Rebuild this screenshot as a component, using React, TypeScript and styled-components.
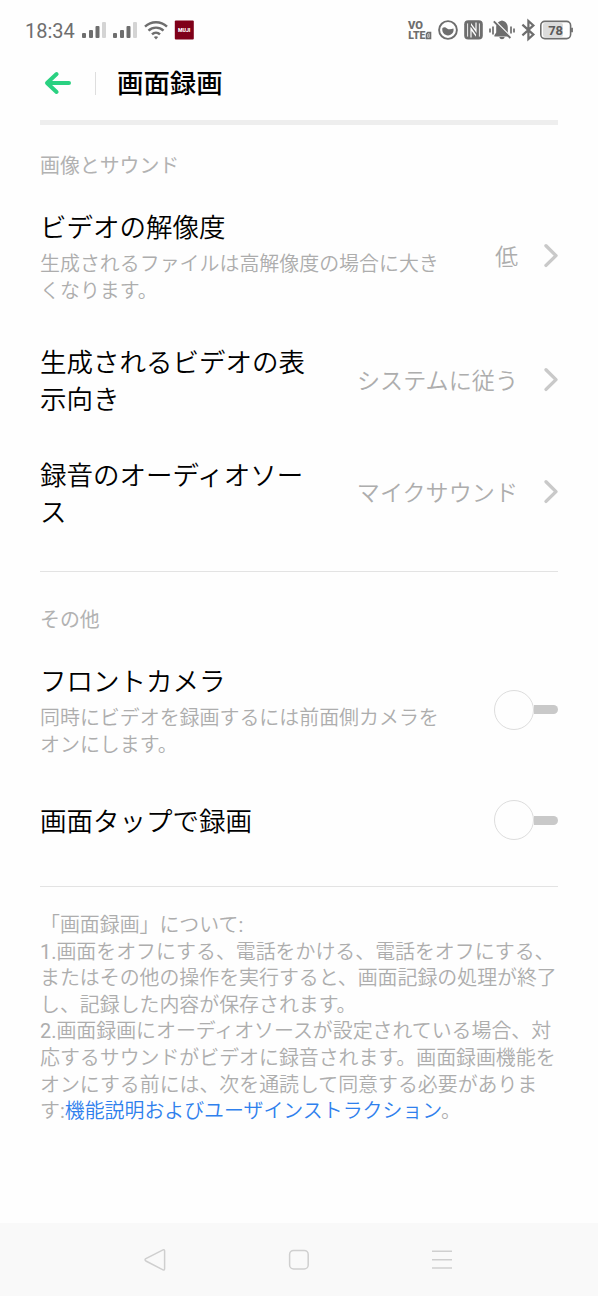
import React from 'react'
import styled, { createGlobalStyle } from 'styled-components'

const colors = {
  text: '#000000',
  muted: '#b2b2b2',
  soft: '#adadad',
  status: '#6e6e6e',
  accent: '#2ad181',
  link: '#2f80ed',
  divider: '#e3e3e3',
  control: '#c9c9c9',
}

const GlobalStyle = createGlobalStyle`
  * {
    box-sizing: border-box;
  }

  body {
    margin: 0;
    background: #fefefe;
    font-family: Roboto, 'Noto Sans CJK JP', sans-serif;
    text-spacing-trim: space-all;
  }

  svg {
    display: block;
    flex: none;
    overflow: visible;
  }
`

const Screen = styled.div`
  display: flex;
  flex-direction: column;
  width: 598px;
  height: 1296px;
  background: #fefefe;
  overflow: hidden;
`

const StatusBar = styled.div`
  display: flex;
  align-items: center;
  justify-content: space-between;
  height: 60px;
  padding: 0 24px 0 25px;
`

const StatusGroup = styled.div`
  display: flex;
  align-items: center;
  gap: 6px;
`

const Time = styled.span`
  width: 51px;
  color: ${colors.status};
  font-size: 20px;
  line-height: 24px;
  padding-top: 2px;
`

const Header = styled.header`
  display: flex;
  align-items: center;
  height: 65px;
  margin: 0 40px;
  padding: 0 0 14px 4px;
  border-bottom: 5px solid #eeeeee;
`

const HeaderDivider = styled.div`
  width: 1px;
  height: 23px;
  margin: 0 21px 0 23px;
  background: #dedede;
`

const HeaderTitle = styled.h1`
  margin: 0;
  padding-top: 2px;
  color: ${colors.text};
  font-size: 26.4px;
  font-weight: 500;
  line-height: 36px;
`

const Section = styled.section<{ $height: number }>`
  height: ${({ $height }) => $height}px;
  margin: 0 40px;
  border-bottom: 1px solid ${colors.divider};
`

const SectionTitle = styled.h2<{ $top: number; $bottom: number }>`
  margin: 0;
  padding: ${({ $top, $bottom }) => `${$top}px 0 ${$bottom}px`};
  color: ${colors.muted};
  font-size: 19.9px;
  font-weight: 400;
  line-height: 30px;
`

const Row = styled.div<{ $height: number }>`
  display: flex;
  align-items: center;
  justify-content: space-between;
  height: ${({ $height }) => $height}px;
`

const RowText = styled.div<{ $width: number }>`
  width: ${({ $width }) => $width}px;
  padding-top: 3px;
`

const RowTitle = styled.div`
  color: ${colors.text};
  font-size: 26.5px;
  font-weight: 350;
  line-height: 37px;
`

const RowDesc = styled.div`
  margin-top: 5px;
  color: ${colors.soft};
  font-size: 19.95px;
  font-weight: 350;
  line-height: 27px;
`

const RowValue = styled.div`
  display: flex;
  align-items: center;
  gap: 26px;
  color: ${colors.soft};
  font-size: 23.1px;
  font-weight: 350;
  white-space: nowrap;

  span {
    padding-top: 4px;
    line-height: 34px;
  }
`

const Switch = styled.div`
  display: flex;
  align-items: center;
  width: 64px;
`

const Knob = styled.div`
  width: 40px;
  height: 40px;
  border: 1px solid #dddddd;
  border-radius: 50%;
`

const Track = styled.div`
  width: 24px;
  height: 9px;
  border-radius: 0 5px 5px 0;
  background: ${colors.control};
`

const Notes = styled.div`
  flex: 1;
  margin: 0 40px;
  padding-top: 26px;
  color: ${colors.soft};
  font-size: 19.92px;
  font-weight: 350;
  line-height: 26.6px;

  p {
    margin: 0;
  }
`

const Latin = styled.span`
  font-weight: 400;
`

const NoteLink = styled.a`
  color: ${colors.link};
`

const NavBar = styled.nav`
  display: flex;
  justify-content: space-between;
  height: 73px;
  padding: 25px 143px 0;
  background: #f9f9f9;
`

const SignalIcon = () => (
  <svg width="25" height="18" viewBox="0 0 25 18" fill={colors.status}>
    <rect x="0" y="12" width="4" height="5" rx="1" />
    <rect x="7" y="9" width="4" height="8" rx="1" />
    <rect x="13.5" y="5" width="4" height="12" rx="1" />
    <rect x="20" y="1" width="4" height="16" rx="1" fill="#d4d4d4" />
  </svg>
)

const WifiIcon = () => (
  <svg width="24" height="20" viewBox="0 0 24 20" fill="none" stroke={colors.status} strokeWidth="2.4">
    <path d="M1 6.6C7.2 0.8 16.8 0.8 23 6.6" />
    <path d="M4.5 10.6C8.8 6.6 15.2 6.6 19.5 10.6" />
    <path d="M8 14.4C10.3 12.2 13.7 12.2 16 14.4" />
    <path d="M9.8 17.1C11.1 16 12.9 16 14.2 17.1L12 19.4Z" fill={colors.status} stroke="none" />
  </svg>
)

const AppIcon = () => (
  <svg width="20" height="20" viewBox="0 0 20 20">
    <rect x="0.8" y="0.5" width="19" height="19" rx="1" fill="#7f0019" />
    <text
      x="10.2"
      y="12"
      fill="#fff"
      fontSize="5.8"
      fontWeight="900"
      textAnchor="middle"
      textLength="12.5"
      lengthAdjust="spacingAndGlyphs"
    >
      MUJI
    </text>
  </svg>
)

const VolteIcon = () => (
  <svg width="24" height="20" viewBox="0 0 24 20" fill={colors.status} fontWeight="900" fontSize="11">
    <text x="0" y="9.2" textLength="15" lengthAdjust="spacingAndGlyphs">
      VO
    </text>
    <text x="0.3" y="19.4" textLength="17" lengthAdjust="spacingAndGlyphs">
      LTE
    </text>
    <path d="M19.8 12.6H22.4V18.4H18.6V14Z" fill="none" stroke={colors.status} strokeWidth="1.8" />
    <path d="M20.6 14V17" stroke={colors.status} strokeWidth="0.8" />
  </svg>
)

const DataIcon = () => (
  <svg width="20" height="20" viewBox="0 0 20 20">
    <circle cx="10" cy="10" r="8.9" fill="none" stroke={colors.status} strokeWidth="1.9" />
    <path
      d="M4.4 8C6 6.8 7.6 7.2 9 8.4C10.8 9.8 13 9.4 15.4 8.6C16.4 12 13.6 15.4 10 15.4C6.4 15.4 3.6 12.2 4.4 8Z"
      fill={colors.status}
    />
  </svg>
)

const NfcIcon = () => (
  <svg width="19" height="20" viewBox="0 0 19 20">
    <rect x="0.2" y="0.3" width="18.6" height="19.2" rx="4" fill={colors.status} />
    <path d="M3.6 3.4V16.6M15.4 3.4V16.6" fill="none" stroke="#fefefe" strokeWidth="0.9" />
    <path d="M7 7.2L12 14.6V16.8L7.6 11V17.6H6.4V7.2Z" fill="#fefefe" />
    <path d="M12.4 12.8L7 5.2V3L11.4 9V2.4H12.6V12.8Z" fill="#fefefe" />
  </svg>
)

const MutedBellIcon = () => (
  <svg width="26" height="20" viewBox="0 0 26 20" fill="none" stroke={colors.status} strokeWidth="1.7">
    <path
      d="M13 0.6C8.8 1.6 7.2 4.4 7.2 8V12.6L5.4 15.2V16.4H20.6V15.2L18.8 12.6V8C18.8 4.4 17.2 1.6 13 0.6ZM10.4 17H15.6C15.4 20 10.6 20 10.4 17Z"
      fill={colors.status}
      stroke="none"
    />
    <path d="M6.8 1.6L22 16.8" stroke="#fefefe" strokeWidth="1.5" />
    <path d="M4.8 1.4L21.4 18" strokeWidth="1.9" />
    <path d="M1 8.5V12.5M4 6.5V14.5M22 6.5V13.5M25 8.5V12.5" />
  </svg>
)

const BluetoothIcon = () => (
  <svg width="14" height="22" viewBox="0 0 14 22" fill="none" stroke={colors.status} strokeWidth="2.2">
    <path d="M1.4 5.6L12.4 15.6L7.4 20V2L12.4 6.4L1.4 16.4" />
  </svg>
)

const BatteryIcon = () => (
  <svg width="33" height="20" viewBox="0 0 33 20">
    <rect x="2" y="3" width="20" height="14" rx="2" fill="#dcdcdc" />
    <rect x="-0.2" y="1.4" width="29.8" height="17.2" rx="4" fill="none" stroke={colors.status} strokeWidth="1.6" />
    <path d="M31 7.8V12.2" stroke={colors.status} strokeWidth="1.8" />
    <text x="14.6" y="14.6" fill="#5a5a5a" fontSize="13" fontWeight="700" textAnchor="middle">
      78
    </text>
  </svg>
)

const BackArrow = () => (
  <svg
    width="28"
    height="24"
    viewBox="0 0 28 24"
    fill="none"
    stroke={colors.accent}
    strokeWidth="4"
    strokeLinecap="round"
    strokeLinejoin="round"
  >
    <path d="M12.6 3L3 12L12.6 21M3.6 12H25" />
  </svg>
)

const Chevron = () => (
  <svg
    width="14"
    height="24"
    viewBox="0 0 14 24"
    fill="none"
    stroke={colors.control}
    strokeWidth="3.4"
    strokeLinecap="round"
    strokeLinejoin="round"
  >
    <path d="M2 1.8L12 11.6L2 21.4" />
  </svg>
)

const Toggle = () => (
  <Switch role="switch" aria-checked={false}>
    <Knob />
    <Track />
  </Switch>
)

const App: React.FC = () => {
  return (
    <>
      <GlobalStyle />
      <Screen>
        <StatusBar>
          <StatusGroup>
            <Time>18:34</Time>
            <SignalIcon />
            <SignalIcon />
            <WifiIcon />
            <AppIcon />
          </StatusGroup>
          <StatusGroup>
            <VolteIcon />
            <DataIcon />
            <NfcIcon />
            <MutedBellIcon />
            <BluetoothIcon />
            <BatteryIcon />
          </StatusGroup>
        </StatusBar>

        <Header>
          <BackArrow />
          <HeaderDivider />
          <HeaderTitle>画面録画</HeaderTitle>
        </Header>

        <Section $height={447}>
          <SectionTitle $top={27} $bottom={6}>
            画像とサウンド
          </SectionTitle>
          <Row $height={135}>
            <RowText $width={410}>
              <RowTitle>ビデオの解像度</RowTitle>
              <RowDesc>生成されるファイルは高解像度の場合に大きくなります。</RowDesc>
            </RowText>
            <RowValue>
              <span>低</span>
              <Chevron />
            </RowValue>
          </Row>
          <Row $height={113}>
            <RowText $width={276}>
              <RowTitle>生成されるビデオの表示向き</RowTitle>
            </RowText>
            <RowValue>
              <span>システムに従う</span>
              <Chevron />
            </RowValue>
          </Row>
          <Row $height={112}>
            <RowText $width={276}>
              <RowTitle>録音のオーディオソース</RowTitle>
            </RowText>
            <RowValue>
              <span>マイクサウンド</span>
              <Chevron />
            </RowValue>
          </Row>
        </Section>

        <Section $height={315}>
          <SectionTitle $top={34} $bottom={6}>
            その他
          </SectionTitle>
          <Row $height={135}>
            <RowText $width={410}>
              <RowTitle>フロントカメラ</RowTitle>
              <RowDesc>同時にビデオを録画するには前面側カメラをオンにします。</RowDesc>
            </RowText>
            <Toggle />
          </Row>
          <Row $height={86}>
            <RowText $width={410}>
              <RowTitle>画面タップで録画</RowTitle>
            </RowText>
            <Toggle />
          </Row>
        </Section>

        <Notes>
          <p>
            「画面録画」について<Latin>:</Latin>
          </p>
          <p>
            <Latin>1.</Latin>
            画面をオフにする、電話をかける、電話をオフにする、またはその他の操作を実行すると、画面記録の処理が終了し、記録した内容が保存されます。
          </p>
          <p>
            <Latin>2.</Latin>
            画面録画にオーディオソースが設定されている場合、対応するサウンドがビデオに録音されます。画面録画機能をオンにする前には、次を通読して同意する必要があります
            <Latin>:</Latin>
            <NoteLink>機能説明およびユーザインストラクション</NoteLink>。
          </p>
        </Notes>

        <NavBar>
          <svg width="24" height="24" viewBox="0 0 24 24" fill="none" stroke="#cfcfcf" strokeWidth="1.5">
            <path d="M20 1.9L2.9 10.6Q1.2 11.8 2.9 13L20 21.9Q21.6 22.4 21.6 20.8V3Q21.6 1.4 20 1.9Z" />
          </svg>
          <svg width="24" height="24" viewBox="0 0 24 24" fill="none" stroke="#cfcfcf" strokeWidth="1.5">
            <rect x="2.6" y="2.4" width="18.6" height="18.6" rx="4" />
          </svg>
          <svg width="24" height="24" viewBox="0 0 24 24" stroke="#cfcfcf" strokeWidth="1.5">
            <path d="M1 3.3H21M1 11.8H21M1 20H21" />
          </svg>
        </NavBar>
      </Screen>
    </>
  )
}

export default App
